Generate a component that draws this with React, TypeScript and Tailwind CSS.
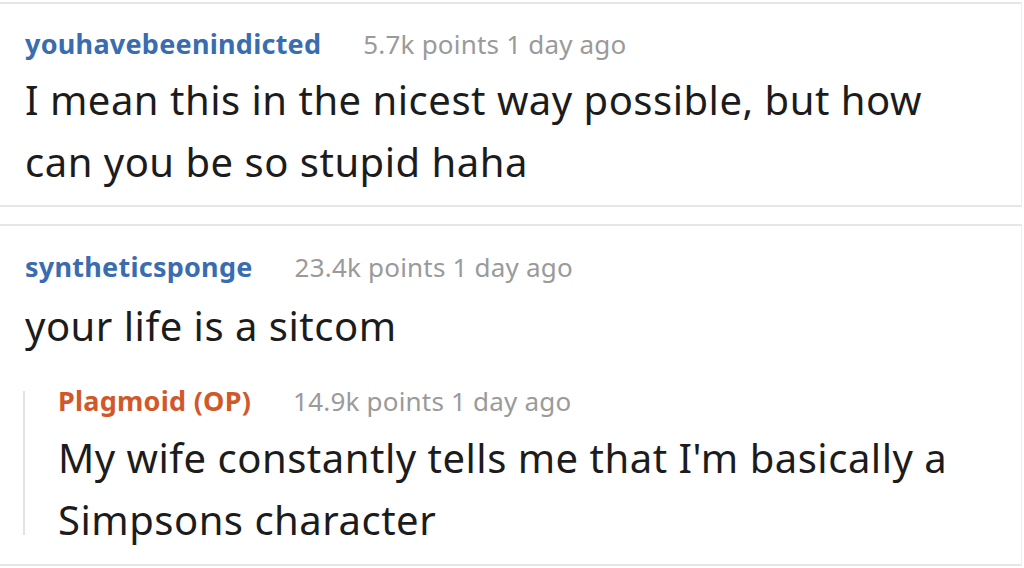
import React from "react";

const font = { fontFamily: '"Noto Sans", "Open Sans", sans-serif' };

function Meta({ name, points, op }: { name: string; points: string; op?: boolean }) {
  return (
    <div className="flex items-baseline h-[32px] leading-[32px] whitespace-nowrap">
      <span className={`text-[27px] font-bold tracking-[0.25px] ${op ? "text-[#d0582a]" : "text-[#3a6cb0]"}`}>{name}</span>
      <span className="ml-[42px] text-[26px] tracking-[0.2px] text-[#9a9a9a]">{points} points 1 day ago</span>
    </div>
  );
}

export default function App() {
  return (
    <div className="w-[1024px] h-[568px] bg-white overflow-hidden text-[#1c1c1c]" style={font}>
      <div className="mt-[2px] w-[1022px] border-t-2 border-b-2 border-r border-t-[#e6e6e6] border-b-[#e6e6e6] border-r-[#efefef] pl-[25px] pt-[24px] pb-[12px]">
        <Meta name="youhavebeenindicted" points="5.7k" />
        <p className="mt-[9px] text-[40px] leading-[62px] tracking-[0.5px]">
          I mean this in the nicest way possible, but how
          <br />
          can you be so stupid haha
        </p>
      </div>
      <div className="mt-[17px] w-[1022px] border-t-2 border-b-2 border-r border-t-[#e6e6e6] border-b-[#e6e6e6] border-r-[#efefef] pl-[25px] pt-[25px] pb-[13px]">
        <Meta name="syntheticsponge" points="23.4k" />
        <p className="mt-[12px] text-[40px] leading-[62px] tracking-[0.5px]">your life is a sitcom</p>
        <div className="mt-[28px] ml-[-2px] flex">
          <div className="w-[2px] bg-[#e3e3e3] mt-[6px] mb-[16px]" />
          <div className="ml-[33px]">
            <Meta name="Plagmoid (OP)" points="14.9k" op />
            <p className="mt-[10px] text-[40px] leading-[62px] tracking-[0.5px]">
              My wife constantly tells me that I'm basically a
              <br />
              Simpsons character
            </p>
          </div>
        </div>
      </div>
    </div>
  );
}
